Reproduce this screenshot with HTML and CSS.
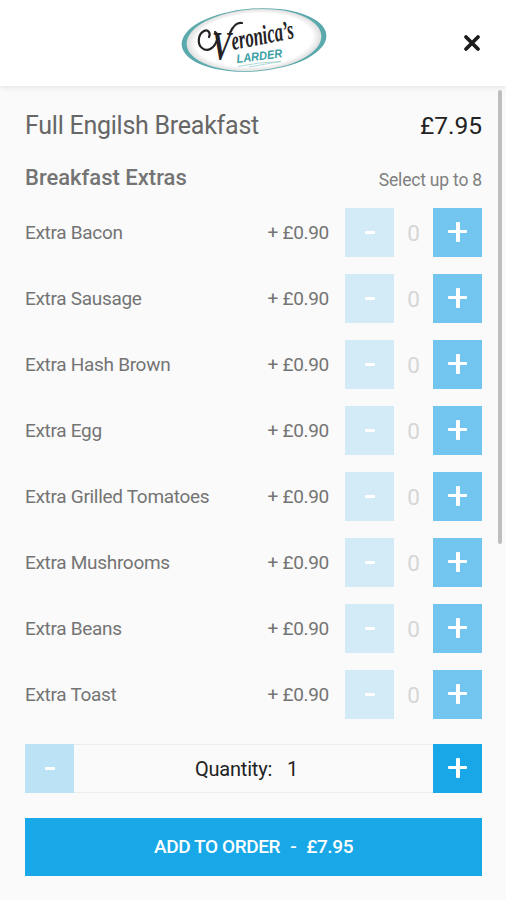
FILE: index.html
```
<!DOCTYPE html>
<html lang="en">
<head>
    <meta charset="UTF-8">
    <meta name="viewport" content="width=device-width, initial-scale=1.0">
    <title>Veronica's Larder - Full Engilsh Breakfast</title>
    <link rel="stylesheet" href="styles.css">
</head>
<body>
    <header class="header">
        <svg class="logo" width="150" height="70" viewBox="0 0 150 70" role="img" aria-label="Veronica's Larder">
            <defs>
                <radialGradient id="plate">
                    <stop offset="0.86" stop-color="#fff"/>
                    <stop offset="1" stop-color="#dedede"/>
                </radialGradient>
            </defs>
            <g transform="rotate(-4 75 35)">
                <ellipse cx="75" cy="35" rx="72.5" ry="31.5" fill="#5aa9ac"/>
                <ellipse cx="75" cy="35" rx="67.5" ry="30.8" fill="url(#plate)"/>
            </g>
            <path d="M30 32 C32 28 29 24 25 26 C19 29 18 39 23 43 C29 48 36 42 38 35 C39 31 38 28 36 27" class="swash"/>
            <path d="M51 28 C54 21 58 17 63 18" class="swash"/>
            <text x="33" y="54" class="logo-v" textLength="19" lengthAdjust="spacingAndGlyphs">V</text>
            <text x="54" y="45" transform="rotate(-11 54 45)" class="logo-name" textLength="63" lengthAdjust="spacingAndGlyphs">eronica’s</text>
            <text x="58" y="58" transform="rotate(-7 58 58)" class="logo-sub" textLength="46" lengthAdjust="spacingAndGlyphs">LARDER</text>
            <path d="M59 61.5 Q80 57 102 56.5 Q86 59 70 62" class="flourish"/>
        </svg>
        <button class="close" aria-label="Close">
            <svg width="18" height="18" viewBox="0 0 18 18"><path d="M3 3 L15 15 M15 3 L3 15"/></svg>
        </button>
    </header>

    <main class="content">
        <div class="scrollbar"></div>

        <div class="title-row">
            <h1>Full Engilsh Breakfast</h1>
            <span class="total">£7.95</span>
        </div>

        <div class="group-row">
            <h2>Breakfast Extras</h2>
            <span class="limit">Select up to 8</span>
        </div>

        <div class="extras" id="extras"></div>

        <div class="quantity">
            <button class="btn minus"><i></i></button>
            <div class="quantity-text"><span>Quantity:</span><span id="quantity">1</span></div>
            <button class="btn plus"><i></i></button>
        </div>

        <button class="add"><span>ADD TO ORDER</span><span>-</span><span class="add-price">£7.95</span></button>
    </main>

    <script>
        const extras = [
            "Extra Bacon",
            "Extra Sausage",
            "Extra Hash Brown",
            "Extra Egg",
            "Extra Grilled Tomatoes",
            "Extra Mushrooms",
            "Extra Beans",
            "Extra Toast"
        ];

        document.getElementById("extras").innerHTML = extras.map(name => `
            <div class="extra">
                <span class="name">${name}</span>
                <span class="price">+ £0.90</span>
                <button class="btn minus"><i></i></button>
                <span class="count">0</span>
                <button class="btn plus"><i></i></button>
            </div>
        `).join("");
    </script>
</body>
</html>
```
FILE: styles.css
```
* {
    box-sizing: border-box;
}

body {
    margin: 0;
    height: 900px;
    background-color: #fafafa;
    color: #747474;
    font-family: Roboto, sans-serif;
    overflow: hidden;
}

button {
    border: none;
    padding: 0;
    font-family: inherit;
    cursor: pointer;
}

.header {
    position: relative;
    display: flex;
    justify-content: center;
    height: 86px;
    padding-top: 5px;
    background-color: #fff;
    box-shadow: 0 1px 6px rgba(0, 0, 0, 0.1);
}

.logo {
    margin-left: 2px;
    overflow: visible;
}

.logo-v,
.logo-name {
    font-family: "Liberation Serif", serif;
    font-style: italic;
    font-weight: bold;
    fill: #252225;
}

.logo-v {
    font-size: 40px;
}

.logo-name {
    font-size: 27px;
}

.logo-sub {
    font-family: "Liberation Sans", sans-serif;
    font-size: 12px;
    font-style: italic;
    font-weight: bold;
    fill: #3ba0a6;
}

.swash {
    fill: none;
    stroke: #252225;
    stroke-width: 2.2;
    stroke-linecap: round;
}

.flourish {
    fill: none;
    stroke: #8fc6c8;
    stroke-width: 0.7;
}

.close {
    position: absolute;
    top: 34px;
    right: 25px;
    width: 18px;
    height: 18px;
    background: none;
}

.close svg {
    display: block;
    fill: none;
    stroke: #1c1c1c;
    stroke-width: 3.8;
    stroke-linecap: round;
}

.content {
    position: relative;
    padding: 24px 24px 0 25px;
}

.scrollbar {
    position: absolute;
    top: 4px;
    right: 4px;
    width: 4px;
    height: 454px;
    border-radius: 2px;
    background-color: #bebebe;
}

.title-row,
.group-row {
    display: flex;
    justify-content: space-between;
    align-items: center;
}

.title-row {
    height: 30px;
}

h1 {
    margin: 0;
    font-size: 25px;
    font-weight: 400;
    letter-spacing: -0.25px;
    color: #666;
}

.total {
    font-size: 24.5px;
    color: #222;
}

.group-row {
    height: 30px;
    margin-top: 23px;
}

h2 {
    margin: 0;
    padding-bottom: 2px;
    font-size: 22px;
    font-weight: 500;
}

.limit {
    padding-top: 4px;
    font-size: 17.5px;
    letter-spacing: -0.2px;
    color: #808080;
}

.extras {
    display: flex;
    flex-direction: column;
    gap: 17px;
    margin-top: 15px;
}

.extra {
    display: flex;
    align-items: center;
    height: 49px;
    font-size: 19px;
    letter-spacing: -0.3px;
}

.name {
    flex: 1;
}

.price {
    margin-right: 16px;
}

.count {
    width: 39px;
    text-align: center;
    font-size: 22.5px;
    color: #d6d6d6;
}

.btn {
    display: flex;
    justify-content: center;
    align-items: center;
    width: 49px;
    height: 49px;
    background-color: #18a8e8;
}

.btn i {
    position: relative;
    display: block;
    width: 10px;
    height: 3px;
    border-radius: 1px;
    background-color: #fff;
}

.plus i {
    width: 19px;
    margin-bottom: 2px;
}

.plus i::after {
    content: "";
    position: absolute;
    left: 7.5px;
    top: -8px;
    width: 4px;
    height: 20px;
    border-radius: 1px;
    background-color: #fff;
}

.extra .plus {
    background-color: #71c5ee;
}

.extra .minus {
    background-color: #d3ebf6;
}

.quantity {
    display: flex;
    height: 49px;
    margin-top: 25px;
}

.quantity .minus {
    background-color: #bbe2f5;
}

.quantity-text {
    flex: 1;
    display: flex;
    justify-content: center;
    align-items: center;
    gap: 15px;
    padding-right: 14px;
    border-top: 1px solid #ececec;
    border-bottom: 1px solid #ececec;
    font-size: 20px;
    letter-spacing: -0.2px;
    color: #222;
}

.add {
    display: flex;
    justify-content: center;
    align-items: center;
    gap: 10px;
    width: 100%;
    height: 58px;
    margin-top: 25px;
    padding-bottom: 2px;
    background-color: #18a8e8;
    color: #fff;
    font-size: 19px;
    font-weight: 500;
    letter-spacing: -0.4px;
}
```
